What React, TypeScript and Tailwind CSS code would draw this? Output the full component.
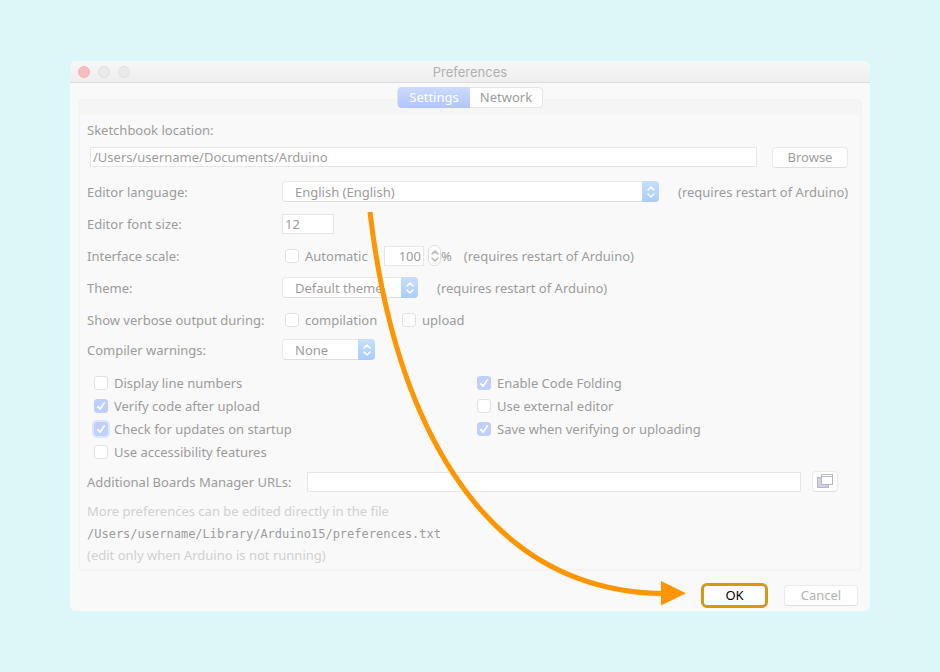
import { useState } from "react";
import type { ReactNode } from "react";

function Chevrons({ className }: { className: string }) {
  return (
    <svg viewBox="0 0 8 12" className={className} fill="none" strokeWidth="1.5" strokeLinecap="round" strokeLinejoin="round" aria-hidden="true">
      <path d="M1 4 L4 1 L7 4 M1 8 L4 11 L7 8" />
    </svg>
  );
}

function Row({ label, htmlFor, children }: { label: string; htmlFor?: string; children: ReactNode }) {
  return (
    <div className="flex h-[21px] items-center">
      <label htmlFor={htmlFor} className="w-[195px] shrink-0">
        {label}
      </label>
      {children}
    </div>
  );
}

function Select({ id, width, options }: { id: string; width: string; options: string[] }) {
  return (
    <span className={`relative flex h-[21px] shrink-0 ${width}`}>
      <select
        id={id}
        className="h-full w-full appearance-none rounded border border-[#e9e9e9] border-b-[#dedede] bg-white pb-px pl-3 outline-none"
      >
        {options.map((o) => (
          <option key={o}>{o}</option>
        ))}
      </select>
      <span className="pointer-events-none absolute inset-y-0 right-0 flex w-[17px] items-center justify-center rounded-r bg-linear-to-b from-[#c6dffe] to-[#aaccff]">
        <Chevrons className="h-3 w-2 stroke-white" />
      </span>
    </span>
  );
}

function Check({ label, checked = false, focused = false }: { label: string; checked?: boolean; focused?: boolean }) {
  return (
    <label className="flex h-[23px] items-center gap-[6px] whitespace-nowrap">
      <span className="relative flex size-[14px]">
        <input
          type="checkbox"
          defaultChecked={checked}
          className={`peer size-[14px] appearance-none rounded-[3px] border border-[#e2e2e2] bg-white outline-none checked:border-[#bfd0ff] checked:bg-[#bfd0ff] ${
            focused ? "ring-2 ring-[#dbe7fc]" : ""
          }`}
        />
        <svg
          viewBox="0 0 14 14"
          className="pointer-events-none absolute inset-0 hidden size-[14px] peer-checked:block"
          fill="none"
          stroke="white"
          strokeWidth="1.6"
          strokeLinecap="round"
          strokeLinejoin="round"
          aria-hidden="true"
        >
          <path d="M3.8 7.6 L6.1 10.2 L10.4 3.8" />
        </svg>
      </span>
      {label}
    </label>
  );
}

const field = "border border-[#e6e6e6] bg-white outline-none";
const pushButton = "rounded border border-[#eaeaea] border-b-[#dfdfdf] bg-white pb-px";
const restart = "(requires restart of Arduino)";

export default function App() {
  const [tab, setTab] = useState("Settings");

  return (
    <main className="min-h-screen bg-[#dcf7f7] px-[70px] pt-[61px] pb-[61px] font-['Noto_Sans','Open_Sans',sans-serif] text-[13px] leading-[20px] text-[#9c9c9c]">
      <section className="relative rounded-md bg-[#f9f9f9]">
        <header className="grid h-[22px] grid-cols-[1fr_auto_1fr] items-center rounded-t-md border-b border-[#dcdcdc] bg-linear-to-b from-[#f7f7f7] to-[#eeeeee] px-2">
          <div className="flex gap-2">
            <button aria-label="Close" className="size-3 rounded-full border border-[#efb5b6] bg-[#f5bdbe]" />
            <button aria-label="Minimize" className="size-3 rounded-full border border-[#e0e0e0] bg-[#eaeaea]" />
            <button aria-label="Zoom" className="size-3 rounded-full border border-[#e0e0e0] bg-[#eaeaea]" />
          </div>
          <h1 className="font-['Inter','Liberation_Sans',sans-serif] text-[13px] text-[#b0b0b0]">Preferences</h1>
        </header>

        <div className="px-2 pt-4">
          <div className="rounded border-2 border-[#f4f4f4]">
            <div className="flex h-[14px] items-center justify-center bg-[#f5f5f5]">
              <div role="tablist" className="-mt-[22px] flex h-[21px] rounded border border-[#e4e4e4] bg-white">
                {["Settings", "Network"].map((name) => (
                  <button
                    key={name}
                    role="tab"
                    aria-selected={tab === name}
                    onClick={() => setTab(name)}
                    className={`-my-px flex h-[21px] w-[72px] items-center justify-center ${
                      tab === name
                        ? "rounded-l bg-linear-to-b from-[#cddaff] to-[#b0c4ff] text-white"
                        : ""
                    }`}
                  >
                    {name}
                  </button>
                ))}
              </div>
            </div>

            <div className="px-[7px] pt-[5px] pb-[4px]">
              <label htmlFor="sketchbook">Sketchbook location:</label>
              <div className="mt-[7px] flex h-[21px] items-start pr-[5px] pl-[3px]">
                <input
                  id="sketchbook"
                  defaultValue="/Users/username/Documents/Arduino"
                  className={`h-5 min-w-0 flex-1 px-[2px] ${field}`}
                />
                <button className={`ml-[15px] flex h-[21px] w-[76px] items-center justify-center ${pushButton}`}>Browse</button>
              </div>

              <div className="mt-[13px] flex flex-col gap-[11px]">
                <Row label="Editor language:" htmlFor="language">
                  <Select id="language" width="w-[377px]" options={["English (English)"]} />
                  <span className="ml-[19px] whitespace-nowrap">{restart}</span>
                </Row>
                <Row label="Editor font size:" htmlFor="fontsize">
                  <input id="fontsize" defaultValue="12" className={`h-5 w-[52px] px-[2px] ${field}`} />
                </Row>
                <Row label="Interface scale:">
                  <span className="ml-[3px] w-[99px]">
                    <Check label="Automatic" />
                  </span>
                  <input aria-label="Scale" defaultValue="100" className={`h-5 w-10 px-[2px] text-right ${field}`} />
                  <button
                    aria-label="Change scale"
                    className="ml-1 flex h-[21px] w-[13px] items-center justify-center rounded-md border border-[#e0e0e0] bg-white"
                  >
                    <Chevrons className="h-3 w-2 stroke-[#b5b5b5]" />
                  </button>
                  <span>%</span>
                  <span className="ml-3 whitespace-nowrap">{restart}</span>
                </Row>
                <Row label="Theme:" htmlFor="theme">
                  <Select id="theme" width="w-[136px]" options={["Default theme"]} />
                  <span className="ml-[19px] whitespace-nowrap">{restart}</span>
                </Row>
                <Row label="Show verbose output during:">
                  <span className="ml-[3px] w-[117px]">
                    <Check label="compilation" />
                  </span>
                  <Check label="upload" />
                </Row>
              </div>

              <div className="mt-[9px]">
                <Row label="Compiler warnings:" htmlFor="warnings">
                  <Select id="warnings" width="w-[93px]" options={["None"]} />
                </Row>
              </div>

              <div className="mt-[11px] grid grid-cols-2 gap-x-[7px] pl-[7px]">
                <div>
                  <Check label="Display line numbers" />
                  <Check label="Verify code after upload" checked />
                  <Check label="Check for updates on startup" checked focused />
                  <Check label="Use accessibility features" />
                </div>
                <div>
                  <Check label="Enable Code Folding" checked />
                  <Check label="Use external editor" />
                  <Check label="Save when verifying or uploading" checked />
                </div>
              </div>

              <div className="mt-2 flex h-[21px] items-center pr-[15px]">
                <label htmlFor="urls" className="w-[220px] shrink-0">
                  Additional Boards Manager URLs:
                </label>
                <input id="urls" className={`h-5 min-w-0 flex-1 px-[2px] ${field}`} />
                <button aria-label="Edit URLs" className={`ml-[11px] flex h-[21px] w-[26px] items-center justify-center ${pushButton}`}>
                  <svg viewBox="0 0 16 14" className="h-[14px] w-4" aria-hidden="true">
                    <rect x="0.5" y="3.5" width="11" height="10" fill="#cfd0e2" stroke="#b5b6cf" />
                    <rect x="4.5" y="0.5" width="11" height="10" fill="white" stroke="#b5b6cf" />
                    <path d="M4.5 2.5 H15.5" stroke="#b5b6cf" />
                  </svg>
                </button>
              </div>

              <p className="mt-[9px] text-[#d0d0d0]">More preferences can be edited directly in the file</p>
              <p className="my-[2px] pt-px font-['DejaVu_Sans_Mono','Liberation_Mono',monospace] text-[12px]">
                /Users/username/Library/Arduino15/preferences.txt
              </p>
              <p className="-mt-[3px] pt-[2px] text-[#d0d0d0]">(edit only when Arduino is not running)</p>
            </div>
          </div>
        </div>

        <footer className="flex items-center justify-end gap-4 pt-3 pr-3 pb-[3px]">
          <button className="flex h-[25px] w-[67px] items-center justify-center rounded-md border-[3px] border-[#dc9706] bg-white pb-px text-black">
            OK
          </button>
          <button className={`flex h-[21px] w-[74px] items-center justify-center text-[#b3b3b3] ${pushButton}`}>Cancel</button>
        </footer>

        {/* Callout arrow from the language menu to the OK button */}
        <svg
          viewBox="360 205 335 410"
          className="pointer-events-none absolute top-[144px] left-[290px] h-[410px] w-[335px]"
          aria-hidden="true"
        >
          <path d="M370 212 C392 400 470 590 662 593.5" fill="none" stroke="#ff9500" strokeWidth="5" />
          <path d="M661 581 L686 593.3 L661 605.6 Z" fill="#ff9500" />
        </svg>
      </section>
    </main>
  );
}
